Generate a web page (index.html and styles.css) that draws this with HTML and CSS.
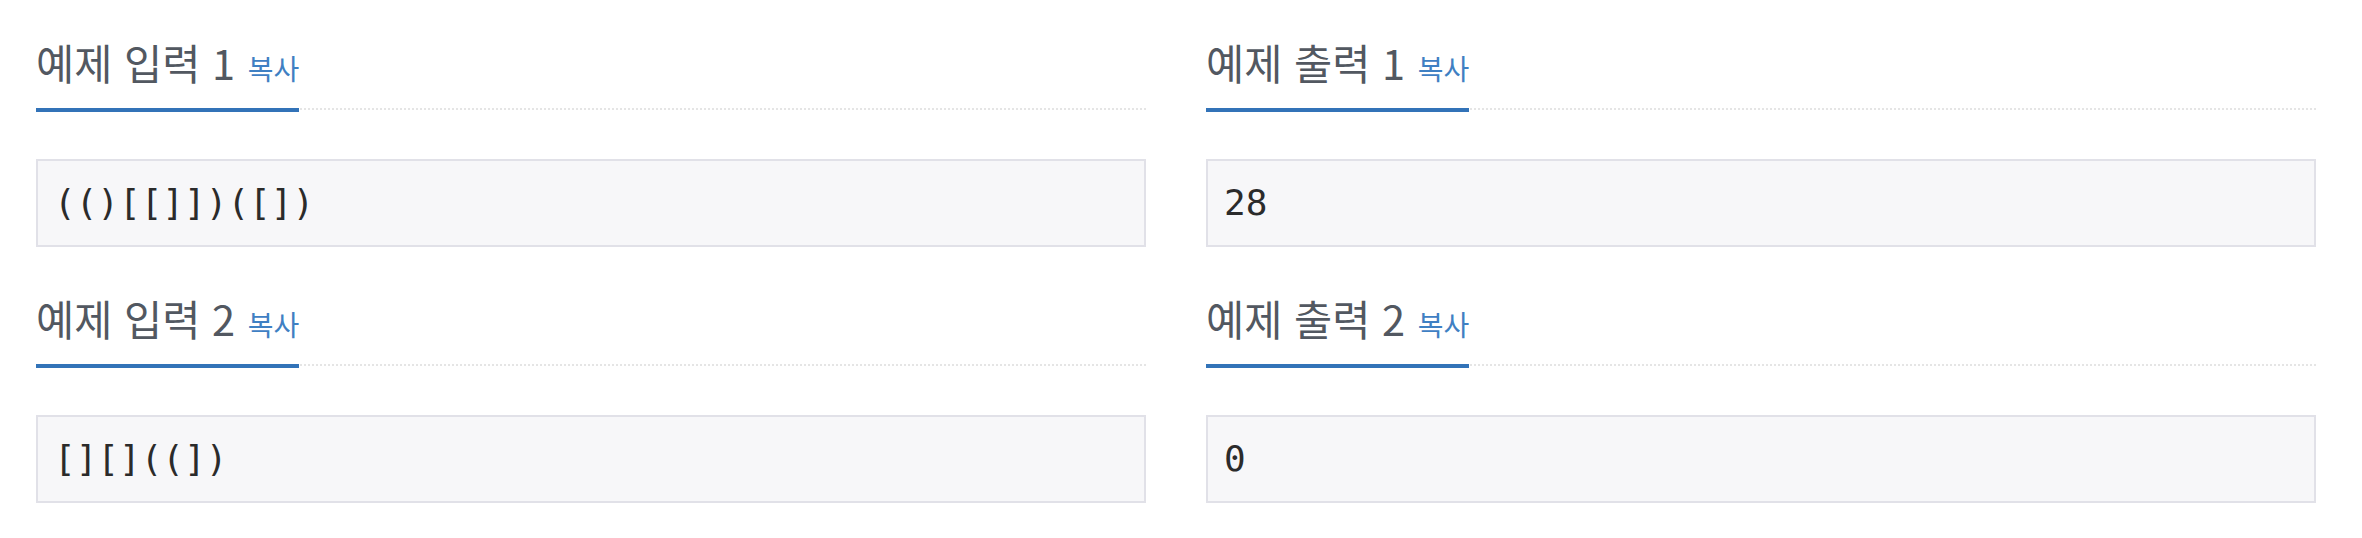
FILE: index.html
```html
<!DOCTYPE html>
<html lang="ko">
<head>
  <meta charset="UTF-8" />
  <meta name="viewport" content="width=device-width, initial-scale=1.0"/>
  <title>괄호의 값 - 예제</title>
  <link rel="stylesheet" href="styles.css">
</head>
<body>
  <div class="samples">
    <div class="sample-row">
      <section class="sample">
        <div class="headline">
          <h2>예제 입력 1 <button class="copy-button">복사</button></h2>
        </div>
        <pre class="sampledata">(()[[]])([])</pre>
      </section>
      <section class="sample">
        <div class="headline">
          <h2>예제 출력 1 <button class="copy-button">복사</button></h2>
        </div>
        <pre class="sampledata">28</pre>
      </section>
    </div>

    <div class="sample-row">
      <section class="sample">
        <div class="headline">
          <h2>예제 입력 2 <button class="copy-button">복사</button></h2>
        </div>
        <pre class="sampledata">[][]((])</pre>
      </section>
      <section class="sample">
        <div class="headline">
          <h2>예제 출력 2 <button class="copy-button">복사</button></h2>
        </div>
        <pre class="sampledata">0</pre>
      </section>
    </div>
  </div>
</body>
</html>
```

FILE: styles.css
```css
* {
  margin: 0;
  padding: 0;
  box-sizing: border-box;
}

body {
  background: #ffffff;
  font-family: 'Noto Sans CJK KR', 'Noto Sans', sans-serif;
  color: #333;
}

.samples {
  padding: 40px 0 0 36px;
}

.sample-row {
  display: grid;
  grid-template-columns: 1110px 1110px;
  column-gap: 60px;
}

.sample {
  margin-bottom: 49px;
}

.headline {
  display: flex;
  border-bottom: 2px dotted #e5e5e5;
  margin-bottom: 49px;
}

.headline h2 {
  font-size: 41.5px;
  font-weight: 400;
  line-height: 44px;
  color: #525861;
  padding-bottom: 20px;
  margin-bottom: -4px;
  border-bottom: 4px solid #3273b8;
}

.copy-button {
  margin-left: 1px;
  background: transparent;
  border: none;
  font-family: inherit;
  font-size: 28px;
  color: #3f80c3;
  cursor: pointer;
}

.sampledata {
  font-family: 'DejaVu Sans Mono', monospace;
  font-size: 36px;
  line-height: 42px;
  color: #2b2b2b;
  background: #f7f7f9;
  border: 2px solid #e1e1e8;
  padding: 21px 16px;
}
```
